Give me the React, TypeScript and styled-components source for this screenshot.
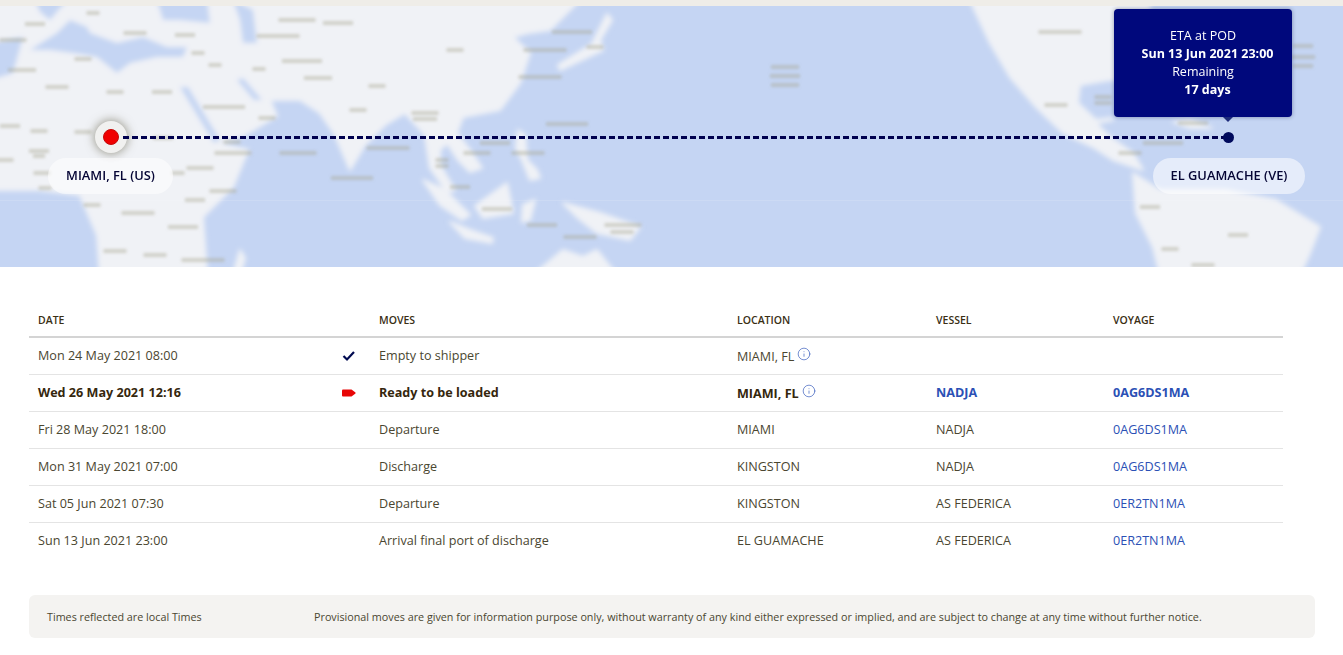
import React from 'react'
import styled, { createGlobalStyle } from 'styled-components'
import { Info } from 'lucide-react'

const moves = [
  { date: 'Mon 24 May 2021 08:00', status: 'done', move: 'Empty to shipper', location: 'MIAMI, FL', info: true, vessel: '', voyage: '' },
  { date: 'Wed 26 May 2021 12:16', status: 'current', move: 'Ready to be loaded', location: 'MIAMI, FL', info: true, vessel: 'NADJA', voyage: '0AG6DS1MA' },
  { date: 'Fri 28 May 2021 18:00', status: '', move: 'Departure', location: 'MIAMI', info: false, vessel: 'NADJA', voyage: '0AG6DS1MA' },
  { date: 'Mon 31 May 2021 07:00', status: '', move: 'Discharge', location: 'KINGSTON', info: false, vessel: 'NADJA', voyage: '0AG6DS1MA' },
  { date: 'Sat 05 Jun 2021 07:30', status: '', move: 'Departure', location: 'KINGSTON', info: false, vessel: 'AS FEDERICA', voyage: '0ER2TN1MA' },
  { date: 'Sun 13 Jun 2021 23:00', status: '', move: 'Arrival final port of discharge', location: 'EL GUAMACHE', info: false, vessel: 'AS FEDERICA', voyage: '0ER2TN1MA' },
]

const land = [
  // africa + eurasia
  'M-10,0 L580,0 L562,18 L550,30 L528,33 L513,37 L530,53 L520,83 L500,110 L463,117 L457,133 L470,150 L482,168 L470,172 L458,160 L447,143 L440,150 L440,165 L455,190 L447,192 L430,168 L425,135 L405,113 L385,125 L365,145 L350,170 L335,135 L320,113 L300,100 L270,100 L277,116 L245,135 L217,143 L248,150 L233,187 L203,217 L207,275 L100,275 L97,235 L80,195 L40,190 L-10,190 Z',
  // north america
  'M970,0 L990,43 L1010,77 L1036,107 L1063,133 L1093,147 L1113,160 L1143,170 L1133,153 L1110,137 L1096,123 L1113,120 L1112,118 L1096,120 L1078,103 L1080,85 L1110,80 L1130,80 L1145,60 L1150,0 Z',
  // south america
  'M1133,173 L1160,190 L1226,190 L1276,200 L1320,227 L1310,253 L1300,275 L1160,275 L1153,247 L1136,213 Z',
  // sumatra
  'M423,180 L445,190 L470,215 L462,220 L440,205 Z',
  // borneo
  'M475,206 L507,183 L513,213 L483,218 Z',
  // java
  'M450,222 L470,230 L493,238 L492,243 L465,238 Z',
  // sulawesi
  'M523,205 L535,200 L530,220 L522,222 Z',
  // philippines
  'M518,130 L525,135 L527,160 L537,170 L540,178 L530,180 L522,160 L516,148 Z',
  // new guinea
  'M563,203 L600,213 L640,227 L630,240 L597,233 L578,218 Z',
  // australia
  'M533,275 L563,250 L583,257 L597,250 L617,275 Z',
  // japan
  'M607,14 L612,20 L600,40 L603,50 L560,70 L558,65 L592,44 Z',
  // cuba
  'M1173,122 L1190,120 L1212,128 L1190,128 Z',
  // madagascar
  'M240,250 L245,258 L240,275 L233,275 Z',
]

const water = [
  // mediterranean
  'M30,50 L57,33 L70,20 L87,27 L90,33 L117,43 L143,37 L167,47 L187,47 L183,57 L157,57 L130,63 L117,73 L97,57 L73,53 L50,50 Z',
  // north atlantic edge
  'M-10,43 L23,37 L13,73 L-10,80 Z',
  // baltic
  'M35,0 L67,0 L50,20 L40,12 Z',
  // black sea
  'M157,0 L207,0 L210,23 L180,20 L163,20 Z',
  // caspian
  'M233,0 L253,10 L257,43 L243,43 L240,20 Z',
  // red sea
  'M180,87 L188,87 L220,140 L214,143 Z',
  // persian gulf
  'M237,80 L243,78 L262,100 L254,100 Z',
]

const labels = [
  [35, 24, 20], [13, 40, 27], [93, 13, 13], [135, 33, 23], [185, 35, 20], [297, 20, 37], [338, 23, 30], [278, 36, 43],
  [198, 53, 13], [215, 65, 13], [83, 59, 17], [22, 70, 28], [302, 61, 40], [259, 69, 13], [57, 87, 23], [115, 92, 17],
  [162, 92, 20], [318, 78, 28], [377, 86, 17], [224, 107, 42], [358, 110, 17], [267, 118, 17], [425, 113, 27], [425, 119, 24],
  [10, 126, 20], [39, 131, 17], [83, 132, 17], [163, 138, 20], [232, 142, 17], [39, 151, 20], [39, 156, 12], [233, 153, 37],
  [298, 153, 37], [388, 148, 43], [5, 160, 17], [200, 168, 27], [352, 178, 42], [178, 173, 13], [42, 173, 17], [223, 191, 27],
  [45, 188, 13], [195, 200, 20], [92, 205, 17], [138, 213, 33], [183, 227, 30], [115, 251, 23], [155, 255, 23], [203, 260, 43],
  [442, 160, 13], [442, 166, 13], [572, 32, 40], [545, 50, 43], [595, 47, 17], [455, 50, 17], [540, 77, 43], [567, 124, 42],
  [495, 143, 30], [477, 153, 27], [528, 153, 33], [460, 187, 20], [497, 209, 30], [542, 225, 30], [580, 237, 33], [623, 225, 37],
  [622, 232, 23], [785, 67, 28], [785, 76, 30], [785, 85, 28], [1060, 32, 43], [1056, 105, 23], [1103, 97, 17], [1103, 103, 17],
  [1163, 143, 40], [1130, 153, 23], [1193, 123, 30], [1150, 207, 20], [1238, 235, 20], [1170, 249, 17], [1203, 265, 23],
  [1303, 46, 20], [1303, 57, 24], [1303, 66, 20],
]

const GlobalStyle = createGlobalStyle`
  html, body {
    margin: 0;
    padding: 0;
    background: #fff;
  }
  body {
    font-family: "Open Sans", "Liberation Sans", sans-serif;
    color: #3d3a2a;
  }
`

const TopStrip = styled.div`
  height: 6px;
  background: #efede8;
`

const MapArea = styled.section`
  position: relative;
  height: 261px;
  overflow: hidden;
  background: #c5d5f3;
`

const MapDrawing = styled.svg`
  display: block;
  width: 100%;
  height: 100%;
`

const RouteLine = styled.div`
  position: absolute;
  left: 123px;
  top: 130px;
  width: 1102px;
  height: 3px;
  background: repeating-linear-gradient(90deg, #00004f 0 6px, transparent 6px 9px);
`

const OriginPin = styled.div`
  position: absolute;
  left: 95px;
  top: 115px;
  width: 32px;
  height: 32px;
  display: flex;
  align-items: center;
  justify-content: center;
  border-radius: 50%;
  background: #f1f1f0;
  box-shadow: 0 0 10px 1px rgba(90, 85, 60, 0.55);

  &::after {
    content: '';
    width: 14px;
    height: 14px;
    border-radius: 50%;
    background: #f00000;
    border: 1px solid #c40a0a;
  }
`

const EndPin = styled.div`
  position: absolute;
  left: 1223px;
  top: 126px;
  width: 11px;
  height: 11px;
  border-radius: 50%;
  background: #000a5c;
`

const PortLabel = styled.div<{ $left: number; $width: number }>`
  position: absolute;
  left: ${p => p.$left}px;
  top: 152px;
  width: ${p => p.$width}px;
  height: 36px;
  box-sizing: border-box;
  padding-bottom: 2px;
  display: flex;
  align-items: center;
  justify-content: center;
  border-radius: 18px;
  background: rgba(255, 255, 255, 0.55);
  color: #050535;
  font-size: 12.87px;
  font-weight: 600;
`

const Tooltip = styled.div`
  position: absolute;
  left: 1114px;
  top: 3px;
  width: 178px;
  height: 108px;
  box-sizing: border-box;
  padding-top: 18px;
  border-radius: 4px;
  background: #00087c;
  box-shadow: 0 0 4px rgba(30, 40, 90, 0.45);
  color: #fff;
  font-size: 12.5px;
  line-height: 18px;
  text-align: center;

  &::after {
    content: '';
    position: absolute;
    left: 109px;
    bottom: -5px;
    border-left: 5px solid transparent;
    border-right: 5px solid transparent;
    border-top: 5px solid #1c2a7a;
  }
`

const TooltipLine = styled.div<{ $strong?: boolean }>`
  font-weight: ${p => (p.$strong ? 700 : 400)};
  padding-left: ${p => (p.$strong ? 9 : 0)}px;
`

const Content = styled.main`
  padding: 35px 28px 0 29px;
`

const MovesTable = styled.table`
  width: 1254px;
  border-collapse: collapse;
  table-layout: fixed;
`

const HeadCell = styled.th<{ $width: number }>`
  width: ${p => p.$width}px;
  height: 35px;
  box-sizing: border-box;
  padding: 2px 0 0 9px;
  border-bottom: 2px solid #d4d4d4;
  color: #3a2f14;
  font-size: 10.5px;
  font-weight: 560;
  text-align: left;
`

const Row = styled.tr<{ $current?: boolean; $last?: boolean }>`
  height: 37px;
  border-bottom: 1px solid ${p => (p.$last ? 'transparent' : '#e4e4e4')};
  font-weight: ${p => (p.$current ? 700 : 400)};
  color: ${p => (p.$current ? '#35270d' : '#4a4630')};
`

const Cell = styled.td`
  box-sizing: border-box;
  padding: 0 0 0 9px;
  font-size: 12.6px;
  white-space: nowrap;
`

const StatusCell = styled.td`
  padding: 0 0 0 1px;
  line-height: 0;
`

const VoyageLink = styled.a`
  color: #2b50b5;
  text-decoration: none;
`

const InfoIcon = styled(Info)`
  margin-left: 3px;
  vertical-align: 0;
  color: #3b5fbd;
`

const Notice = styled.footer`
  display: flex;
  align-items: center;
  width: 1286px;
  height: 43px;
  margin-top: 35px;
  box-sizing: border-box;
  padding-left: 18px;
  border-radius: 6px;
  background: #f4f3f1;
  color: #4a4630;
  font-size: 10.77px;
`

const NoticeLead = styled.span`
  width: 267px;
  flex-shrink: 0;
`

const StatusIcon = ({ status }: { status: string }) => {
  if (status === 'done') {
    return (
      <svg width="14" height="12" viewBox="0 0 14 12" style={{ marginLeft: 7 }}>
        <path d="M1.5 6 L5 9.5 L12 2" fill="none" stroke="#000a50" strokeWidth="2.2" />
      </svg>
    )
  }
  if (status === 'current') {
    return (
      <svg width="14" height="8" viewBox="0 0 14 8" style={{ marginLeft: 7 }}>
        <path d="M1 0.5 H9.5 L13.5 3.5 V4.5 L9.5 7.5 H1 Q0 7.5 0 6.5 V1.5 Q0 0.5 1 0.5 Z" fill="#e80606" />
      </svg>
    )
  }
  return null
}

const App = () => {
  return (
    <>
      <GlobalStyle />
      <TopStrip />
      <MapArea>
        <MapDrawing viewBox="0 6 1343 261" preserveAspectRatio="none">
          <defs>
            <filter id="soft" filterUnits="userSpaceOnUse" x="-20" y="-20" width="1400" height="310">
              <feGaussianBlur stdDeviation="2.4" />
            </filter>
            <filter id="softer" filterUnits="userSpaceOnUse" x="-20" y="-20" width="1400" height="310">
              <feGaussianBlur stdDeviation="1.8" />
            </filter>
          </defs>
          <g filter="url(#soft)">
            {land.map((d, i) => <path key={i} d={d} fill="#f0f2f6" stroke="#f0f2f6" strokeWidth="2" strokeLinejoin="round" />)}
            {water.map((d, i) => <path key={i} d={d} fill="#c5d5f3" />)}
          </g>
          <rect x="0" y="200" width="1343" height="1" fill="#fff" opacity="0.12" />
          <g filter="url(#softer)">
            {labels.map(([x, y, w], i) => (
              <rect key={i} x={x - w / 2} y={y - 2} width={w} height={4} fill="#a8a490" opacity="0.42" />
            ))}
          </g>
        </MapDrawing>
        <OriginPin />
        <RouteLine />
        <EndPin />
        <PortLabel $left={48} $width={125}>MIAMI, FL (US)</PortLabel>
        <PortLabel $left={1153} $width={152}>EL GUAMACHE (VE)</PortLabel>
        <Tooltip>
          <TooltipLine>ETA at POD</TooltipLine>
          <TooltipLine $strong>Sun 13 Jun 2021 23:00</TooltipLine>
          <TooltipLine>Remaining</TooltipLine>
          <TooltipLine $strong>17 days</TooltipLine>
        </Tooltip>
      </MapArea>
      <Content>
        <MovesTable>
          <thead>
            <tr>
              <HeadCell $width={305}>DATE</HeadCell>
              <HeadCell $width={36} />
              <HeadCell $width={358}>MOVES</HeadCell>
              <HeadCell $width={199}>LOCATION</HeadCell>
              <HeadCell $width={177}>VESSEL</HeadCell>
              <HeadCell $width={179}>VOYAGE</HeadCell>
            </tr>
          </thead>
          <tbody>
            {moves.map((m, i) => (
              <Row key={i} $current={m.status === 'current'} $last={i === moves.length - 1}>
                <Cell>{m.date}</Cell>
                <StatusCell><StatusIcon status={m.status} /></StatusCell>
                <Cell>{m.move}</Cell>
                <Cell>
                  {m.location}
                  {m.info && <InfoIcon size={14} strokeWidth={1.2} />}
                </Cell>
                <Cell>{m.status === 'current' ? <VoyageLink href="#">{m.vessel}</VoyageLink> : m.vessel}</Cell>
                <Cell><VoyageLink href="#">{m.voyage}</VoyageLink></Cell>
              </Row>
            ))}
          </tbody>
        </MovesTable>
        <Notice>
          <NoticeLead>Times reflected are local Times</NoticeLead>
          <span>Provisional moves are given for information purpose only, without warranty of any kind either expressed or implied, and are subject to change at any time without further notice.</span>
        </Notice>
      </Content>
    </>
  )
}

export default App
